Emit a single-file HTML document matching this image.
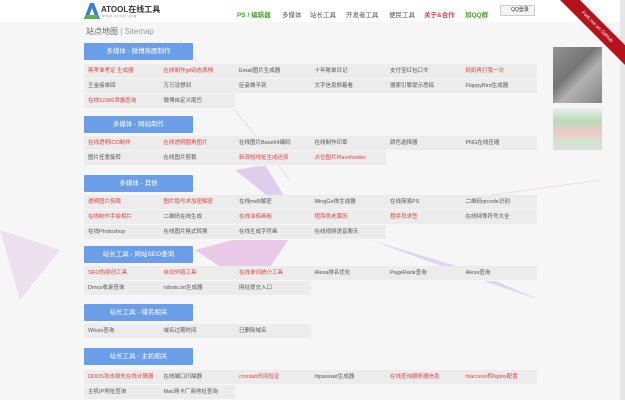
<!DOCTYPE html>
<html><head><meta charset="utf-8"><style>
*{margin:0;padding:0;box-sizing:border-box}
body{width:625px;height:400px;overflow:hidden;background:#f6f6f6;font-family:"Liberation Sans","Noto Sans CJK SC",sans-serif;position:relative}
.hdr{position:absolute;left:0;top:0;width:625px;height:22px;background:#fff}
.abs{position:absolute}
.nav{position:absolute;top:9px;font-size:6.5px;color:#555;white-space:nowrap}
.btn{position:absolute;left:84px;width:109px;height:17px;background:#6a9ee8;color:#fff;font-size:6.5px;text-align:center;line-height:17px;border-radius:1px}
.grid{position:absolute;left:84px;width:453px}
.c{position:absolute;width:75.5px;height:15px;background:#ececec;font-size:5.5px;line-height:15px;padding-left:4px;color:#555;white-space:nowrap;overflow:hidden;border-bottom:1px solid #f6f6f6}
.r{color:#e0433f}
</style></head><body>
<svg class="abs" style="left:0;top:0" width="625" height="400">
<polygon points="235,170 265,165 300,222" fill="#d9c3ec" opacity=".8"/>
<polygon points="195,250 300,222 255,290" fill="#e5b6e3" opacity=".7"/>
<polygon points="0,230 60,250 20,300" fill="#ead8ee" opacity=".7"/>
<polygon points="370,240 480,280 540,300 470,270" fill="#d6c8ee" opacity=".7"/>
<line x1="180" y1="40" x2="290" y2="180" stroke="#e6dede" stroke-width="1"/>
<line x1="300" y1="222" x2="600" y2="180" stroke="#e8e0e0" stroke-width="1"/>
</svg>
<div class="hdr"></div>
<svg class="abs" style="left:84px;top:3px" width="16" height="16"><polygon points="0,16 6,0 10,0 16,16 12,16 8,5 4,16" fill="#3b7dd8"/><rect x="2" y="12" width="12" height="4" fill="#59b24b"/></svg>
<div class="abs" style="left:101px;top:4px;font-size:8px;color:#333;font-weight:bold">ATOOL在线工具</div>
<div class="abs" style="left:102px;top:14px;font-size:3.5px;color:#888;letter-spacing:1px">www.atool.org</div>
<div class="nav" style="left:237px;color:#4aa02c;font-weight:bold">PS / 编辑器</div>
<div class="nav" style="left:282px">多媒体</div>
<div class="nav" style="left:310px">站长工具</div>
<div class="nav" style="left:346px">开发者工具</div>
<div class="nav" style="left:389px">便民工具</div>
<div class="nav" style="left:424px;color:#e0433f;font-weight:bold">关于&amp;合作</div>
<div class="nav" style="left:465px;color:#4aa02c;font-weight:bold">加QQ群</div>
<div class="abs" style="left:500px;top:5px;width:35px;height:11px;border:1px solid #ccc;background:#f4f4f4;font-size:5px;line-height:9px;padding-left:10px;color:#333">QQ登录</div>
<div class="abs" style="left:86px;top:26px;font-size:8px;color:#666">站点地图 <span style="color:#999">| Sitemap</span></div>
<div class="abs" style="left:553px;top:47px;width:49px;height:56px;background:linear-gradient(135deg,#888,#666 40%,#aaa 60%,#777);opacity:.9"></div>
<div class="abs" style="left:553px;top:108px;width:49px;height:42px;background:linear-gradient(180deg,#eee,#b8dcb8 30%,#f3c8c8 60%,#cfe6cf 80%,#ddd)"></div>
<div class="abs" style="left:620px;top:0;width:5px;height:400px;background:#e6e6e6"></div>
<div class="abs" style="left:542px;top:20px;width:110px;height:14px;background:#b5121b;transform:rotate(45deg);color:#fff;font-size:5px;text-align:center;line-height:14px">Fork me on GitHub</div>

<div class="btn" style="top:43px">多媒体 - 微博热图制作</div>
<div class="grid" style="top:64px">
<div class="c r" style="left:0;top:0">蒋孝准考证 生成器</div><div class="c r" style="left:75.5px;top:0">在线制作gif动态表情</div><div class="c" style="left:151px;top:0">Email图片生成器</div><div class="c" style="left:226.5px;top:0">十年账单日记</div><div class="c" style="left:302px;top:0">支付宝红包口令</div><div class="c r" style="left:377.5px;top:0">妈妈再打我一次</div>
<div class="c" style="left:0;top:15px">王金接单回</div><div class="c" style="left:75.5px;top:15px">万万没想到</div><div class="c" style="left:151px;top:15px">臣妾做不到</div><div class="c" style="left:226.5px;top:15px">文字信息斜着看</div><div class="c" style="left:302px;top:15px">搜索引擎提示恶搞</div><div class="c" style="left:377.5px;top:15px">FlappyBird生成器</div>
<div class="c r" style="left:0;top:30px">在线12306泄露查询</div><div class="c" style="left:75.5px;top:30px">微博自定义尾巴</div>
</div>

<div class="btn" style="top:116px">多媒体 - 网站制作</div>
<div class="grid" style="top:136px">
<div class="c r" style="left:0;top:0">在线透明ICO制作</div><div class="c r" style="left:75.5px;top:0">在线透明圆角图片</div><div class="c" style="left:151px;top:0">在线图片Base64编码</div><div class="c" style="left:226.5px;top:0">在线制作印章</div><div class="c" style="left:302px;top:0">颜色选择器</div><div class="c" style="left:377.5px;top:0">PNG在线压缩</div>
<div class="c" style="left:0;top:15px">图片任意旋转</div><div class="c" style="left:75.5px;top:15px">在线图片剪裁</div><div class="c r" style="left:151px;top:15px">新浪短地址生成还原</div><div class="c r" style="left:226.5px;top:15px">占位图片Placeholder</div>
</div>

<div class="btn" style="top:175px">多媒体 - 其他</div>
<div class="grid" style="top:195px">
<div class="c r" style="left:0;top:0">透明图片剪裁</div><div class="c r" style="left:75.5px;top:0">图片隐写术加密解密</div><div class="c" style="left:151px;top:0">在线md5解密</div><div class="c" style="left:226.5px;top:0">MingGe体生成器</div><div class="c" style="left:302px;top:0">在线简易PS</div><div class="c" style="left:377.5px;top:0">二维码qrcode识别</div>
<div class="c r" style="left:0;top:15px">在线制作手绘相片</div><div class="c" style="left:75.5px;top:15px">二维码在线生成</div><div class="c r" style="left:151px;top:15px">在线涂鸦画板</div><div class="c r" style="left:226.5px;top:15px">程序员老黄历</div><div class="c r" style="left:302px;top:15px">程序员求签</div><div class="c" style="left:377.5px;top:15px">在线特殊符号大全</div>
<div class="c" style="left:0;top:30px">在线Photoshop</div><div class="c" style="left:75.5px;top:30px">在线图片格式转换</div><div class="c" style="left:151px;top:30px">在线生成字符画</div><div class="c" style="left:226.5px;top:30px">在线视频语音聊天</div>
</div>

<div class="btn" style="top:246px">站长工具 - 网站SEO查询</div>
<div class="grid" style="top:266px">
<div class="c r" style="left:0;top:0">SEO伪原创工具</div><div class="c r" style="left:75.5px;top:0">自动外链工具</div><div class="c r" style="left:151px;top:0">在线单词统计工具</div><div class="c" style="left:226.5px;top:0">Alexa排名优化</div><div class="c" style="left:302px;top:0">PageRank查询</div><div class="c" style="left:377.5px;top:0">Alexa查询</div>
<div class="c" style="left:0;top:15px">Dmoz收录查询</div><div class="c" style="left:75.5px;top:15px">robots.txt生成器</div><div class="c" style="left:151px;top:15px">网址提交入口</div>
</div>

<div class="btn" style="top:304px">站长工具 - 域名相关</div>
<div class="grid" style="top:324px">
<div class="c" style="left:0;top:0">Whois查询</div><div class="c" style="left:75.5px;top:0">域名过期时间</div><div class="c" style="left:151px;top:0">已删除域名</div>
</div>

<div class="btn" style="top:348px">站长工具 - 主机相关</div>
<div class="grid" style="top:370px">
<div class="c r" style="left:0;top:0">DDOS攻击损失在线计算器</div><div class="c" style="left:75.5px;top:0">在线端口扫描器</div><div class="c r" style="left:151px;top:0">crontab时间验证</div><div class="c" style="left:226.5px;top:0">htpasswd生成器</div><div class="c r" style="left:302px;top:0">在线查询服务器信息</div><div class="c r" style="left:377.5px;top:0">htaccess转Nginx配置</div>
<div class="c" style="left:0;top:15px">主机IP地址查询</div><div class="c" style="left:75.5px;top:15px">Mac网卡厂商地址查询</div>
</div>
</body></html>
